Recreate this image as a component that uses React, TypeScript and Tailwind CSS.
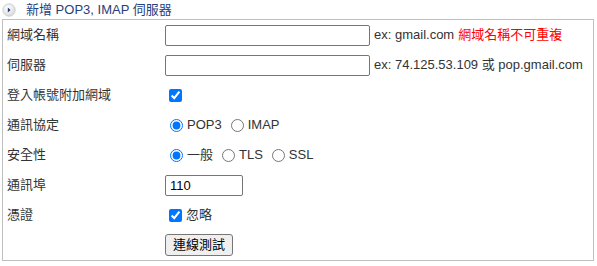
import React from "react";

const font = { fontFamily: '"Liberation Sans", Arial, "Noto Sans CJK TC", sans-serif' };

function Row({ label, children }: { label: string; children?: React.ReactNode }) {
  return (
    <div className="flex h-[30px] items-center">
      <div className="w-[162px] shrink-0 pl-[4px] text-[#333]">{label}</div>
      <div className="flex items-center">{children}</div>
    </div>
  );
}

function Radio({ name, label, checked, last }: { name: string; label: string; checked?: boolean; last?: boolean }) {
  return (
    <label className={`flex items-center ${last ? "" : "mr-[4px]"}`}>
      <input
        type="radio"
        name={name}
        defaultChecked={checked}
        className="ml-[5px] mr-[4px] h-[13px] w-[13px]"
      />
      <span className="text-[#333]">{label}</span>
    </label>
  );
}

export default function App() {
  return (
    <div className="w-[597px] h-[266px] bg-white text-[13px]" style={font}>
      <div className="flex h-[19px] items-center">
        <svg width="14" height="14" viewBox="0 0 14 14" className="ml-[2px] mt-[1px]">
          <defs>
            <radialGradient id="g" cx="40%" cy="35%" r="70%">
              <stop offset="0%" stopColor="#ffffff" />
              <stop offset="100%" stopColor="#d8d8d8" />
            </radialGradient>
          </defs>
          <circle cx="7" cy="7" r="6.2" fill="url(#g)" stroke="#c8c8c8" strokeWidth="0.8" />
          <path d="M5.8 4.6 L8.6 7 L5.8 9.4 Z" fill="#27407c" />
        </svg>
        <span className="ml-[10px] text-[13px] text-[#27407c]">新增 POP3, IMAP 伺服器</span>
      </div>
      <div className="ml-[2px] w-[592px] border border-[#bfbfbf]">
        <Row label="網域名稱">
          <input type="text" className="h-[21px] w-[205px] rounded-[2px] border border-[#767676] bg-white px-[2px]" />
          <span className="ml-[4px] text-[#333]">ex: gmail.com</span>
          <span className="ml-[4px] text-[#ff0000]">網域名稱不可重複</span>
        </Row>
        <Row label="伺服器">
          <input type="text" className="h-[21px] w-[205px] rounded-[2px] border border-[#767676] bg-white px-[2px]" />
          <span className="ml-[4px] text-[#333]">ex: 74.125.53.109 或 pop.gmail.com</span>
        </Row>
        <Row label="登入帳號附加網域">
          <input type="checkbox" defaultChecked className="ml-[4px] h-[13px] w-[13px]" />
        </Row>
        <Row label="通訊協定">
          <Radio name="proto" label="POP3" checked />
          <Radio name="proto" label="IMAP" last />
        </Row>
        <Row label="安全性">
          <Radio name="sec" label="一般" checked />
          <Radio name="sec" label="TLS" />
          <Radio name="sec" label="SSL" last />
        </Row>
        <Row label="通訊埠">
          <input
            type="text"
            defaultValue="110"
            className="h-[21px] w-[78px] rounded-[2px] border border-[#767676] bg-white px-[4px] text-black"
          />
        </Row>
        <Row label="憑證">
          <label className="flex items-center">
            <input type="checkbox" defaultChecked className="ml-[4px] mr-[4px] h-[13px] w-[13px]" />
            <span className="text-[#333]">忽略</span>
          </label>
        </Row>
        <Row label="">
          <button className="h-[22px] w-[68px] rounded-[3px] border border-[#767676] bg-[#efefef] text-black">
            連線測試
          </button>
        </Row>
      </div>
    </div>
  );
}
